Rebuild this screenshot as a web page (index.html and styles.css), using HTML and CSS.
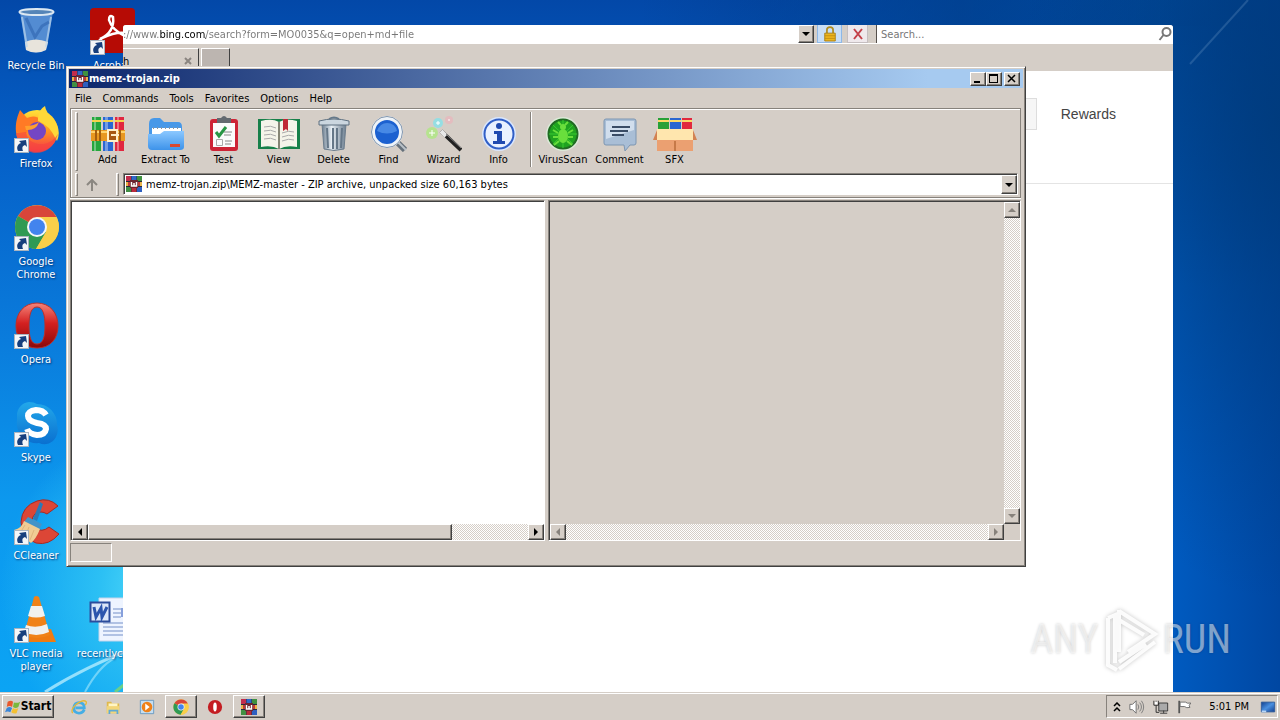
FILE: index.html
```html
<!DOCTYPE html>
<html lang="en">
<head>
  <meta charset="UTF-8" />
  <meta name="viewport" content="width=device-width, initial-scale=1.0" />
  <title>Desktop</title>
  <link rel="stylesheet" href="styles.css">
</head>
<body>
  <!-- shared icons -->
  <svg class="defs" aria-hidden="true">
    <defs>
      <linearGradient id="gFolder" x1="0" y1="0" x2="0" y2="1"><stop offset="0" stop-color="#8cc8ff"/><stop offset="1" stop-color="#3d93ea"/></linearGradient>
      <linearGradient id="gSteel" x1="0" y1="0" x2="1" y2="0"><stop offset="0" stop-color="#6d7f90"/><stop offset=".4" stop-color="#e8eff5"/><stop offset="1" stop-color="#6d7f90"/></linearGradient>
      <linearGradient id="gOpera" x1="0" y1="0" x2="0" y2="1"><stop offset="0" stop-color="#f4857a"/><stop offset=".45" stop-color="#d42020"/><stop offset="1" stop-color="#8a0808"/></linearGradient>
      <linearGradient id="gFox" x1="0" y1="0" x2="0" y2="1"><stop offset="0" stop-color="#ffe23a"/><stop offset=".5" stop-color="#ff9520"/><stop offset="1" stop-color="#f3324f"/></linearGradient>
      <linearGradient id="gSkype" x1="0" y1="0" x2="0" y2="1"><stop offset="0" stop-color="#22a8ea"/><stop offset="1" stop-color="#0a70d0"/></linearGradient>
      <linearGradient id="gScreen" x1="0" y1="0" x2="1" y2="1"><stop offset="0" stop-color="#103f8e"/><stop offset=".5" stop-color="#4a90e0"/><stop offset="1" stop-color="#123f90"/></linearGradient>
    </defs>
    <symbol id="shortcut" viewBox="0 0 15 15">
      <rect x=".5" y=".5" width="14" height="14" fill="#f4f6f8" stroke="#a9b4c0"/>
      <path d="M4 13C2 9 4 6 7 5L5 3l7-1 1 7-2-2C8 8 8 10 9 13z" fill="#173f7d"/>
    </symbol>
    <symbol id="rar" viewBox="0 0 16 16">
      <rect width="16" height="16" fill="#25283a"/>
      <path fill="#c22c4c" d="M0 0h5v5H0z"/><path fill="#2f68c8" d="M5.500 0h5v5h-5z"/><path fill="#3f9140" d="M11 0h5v5h-5z"/>
      <path fill="#c43b36" d="M0 6h16v4H0z"/><path fill="#e9b44a" d="M0 6h2v4H0zm14 0h2v4h-2z"/>
      <path fill="#418f43" d="M0 11h5v5H0z"/><path fill="#bb2a3c" d="M5.500 11h5v5h-5z"/><path fill="#2e5fc0" d="M11 11h5v5h-5z"/>
      <path fill="#6b2430" d="M4 4h8v8H4z"/><path d="M5.500 6v4h5V6M8 7v3" fill="none" stroke="#fff" stroke-width="1.500"/>
    </symbol>
    <symbol id="chrome" viewBox="0 0 46 46">
      <circle cx="23" cy="23" r="22" fill="#f6ca45"/>
      <path d="M23 23 4 12a22 22 0 0 1 38.500 1z" fill="#d8453a"/>
      <path d="M4 12a22 22 0 0 0 18 33l10-17-9-5z" fill="#2f9a54"/>
      <path d="M23 13h19.500A22 22 0 0 1 22 45l10-17z" fill="#f9cf4a"/>
      <circle cx="23" cy="23" r="10" fill="#f4f7f9"/><circle cx="23" cy="23" r="8" fill="#4284ee"/>
    </symbol>
  </svg>

  <main class="desktop">
    <svg class="streaks left" viewBox="0 0 124 110" aria-hidden="true">
      <path d="M30 110Q70 85 124 64" stroke="#c8f4ff" stroke-width="3" opacity=".7"/>
      <path d="M70 110Q84 84 100 76" stroke="#a5e8fb" stroke-width="2" opacity=".6"/>
      <path d="M100 110l10-8" stroke="#6ad08a" stroke-width="3"/>
    </svg>
    <svg class="streaks right" viewBox="0 0 100 80" aria-hidden="true">
      <path d="M10 64 68 0" stroke="#7fa9d0" stroke-width="2" opacity=".25"/>
    </svg>

    <nav class="icons" aria-label="Desktop icons">
      <a class="icon" href="#"><svg class="pic" viewBox="0 0 48 48">
        <path d="M8 4 14 42q10 5 20 0L41 4z" fill="#6298d8" opacity=".85"/>
        <path d="M13 34q10-5 23 0l-2 8q-10 5-20 0z" fill="#e8e4dc"/>
        <path d="m10 9 5 30M39 9l-5 30" stroke="#bcd6ee" stroke-width="2" opacity=".7"/>
        <path d="m14 10 9 19 7-11 7-4" fill="none" stroke="#285ca8" stroke-width="3" opacity=".5"/>
        <ellipse cx="24.500" cy="4" rx="17" ry="3" fill="#5585b8" stroke="#dce8f2" stroke-width="2"/></svg><span>Recycle Bin</span></a>
      <a class="icon" href="#"><svg class="pic" viewBox="0 0 48 48">
        <circle cx="25" cy="25" r="21" fill="url(#gFox)"/>
        <path d="M4 26C3 16 6 9 8 4l7 8q8-4 15 2L24 21q-8 0-9 6z" fill="#ff7a25"/>
        <path d="M26 12Q27 3 33 0q1 7 8 12 9 12 4 23-8-17-19-20z" fill="#ffd838"/>
        <path d="M4 27q3 17 18 20 18 1 24-19-5 8-14 10-16 1-18-12z" fill="#f6433f" opacity=".65"/>
        <circle cx="25" cy="25" r="9" fill="#7446c4"/><path d="M13 20q10 0 14-4-3 9-13 8z" fill="#ffa02d"/></svg>
        <svg class="link"><use href="#shortcut"/></svg><span>Firefox</span></a>
      <a class="icon" href="#"><svg class="pic" viewBox="-2 0 48 48"><use href="#chrome" width="46" height="46"/></svg>
        <svg class="link"><use href="#shortcut"/></svg><span>Google Chrome</span></a>
      <a class="icon" href="#"><svg class="pic" viewBox="0 0 48 48">
        <path fill-rule="evenodd" d="M25 1C12 1 4 11 4 24s8 22 21 22 21-9 21-22S38 1 25 1zm0 4c6 0 8 8 8 19s-2 18-8 18-8-7-8-18 2-19 8-19z" fill="url(#gOpera)" stroke="#ba302b"/></svg>
        <svg class="link"><use href="#shortcut"/></svg><span>Opera</span></a>
      <a class="icon" href="#"><svg class="pic" viewBox="0 0 48 48">
        <path d="M5 15A13 13 0 0 1 17 2q5 0 8 2a20 20 0 0 1 20 21q2 6-1 12a13 13 0 0 1-17 6A20 20 0 0 1 5 20z" fill="url(#gSkype)"/>
        <path d="M34 15q-3-5-10-5-8 1-8 6 0 5 9 7 9 1 9 6-1 6-9 6-8-1-10-6" fill="none" stroke="#fff" stroke-width="6"/></svg>
        <svg class="link"><use href="#shortcut"/></svg><span>Skype</span></a>
      <a class="icon" href="#"><svg class="pic" viewBox="0 0 48 48">
        <path d="M46 8Q37-1 25 3 10 8 9 24q1 16 15 21 13 3 23-9l-10-7q-7 6-14 1-6-8 0-14 6-4 12 0z" fill="#dc4636" stroke="#a52b25"/>
        <path d="m28 4 3 2-6 17-4-2z" fill="#2a7ab8"/><path d="m16 19 14 7-3 6-15-8z" fill="#4393c8"/>
        <path d="M12 23 28 31q-4 10-9 14L2 32q8-2 10-9z" fill="#f0cc94"/><path d="m13 27-5 8m9-6-4 10m9-7-4 10" stroke="#e0b47c"/></svg>
        <svg class="link"><use href="#shortcut"/></svg><span>CCleaner</span></a>
      <a class="icon" href="#"><svg class="pic" viewBox="0 0 48 48">
        <path d="m11 34-5 12h38l-5-13z" fill="#ee7b12"/><path d="M22 1q2-2 5 0l11 38q-13 6-26 0z" fill="#f08218"/>
        <path d="m19 10-3 10q8 3 17 0l-3-10zm-5 19-2 7q12 6 25 0l-2-8q-11 5-21 1z" fill="#f1f1ef"/></svg>
        <svg class="link"><use href="#shortcut"/></svg><span>VLC media player</span></a>
      <a class="icon" href="#"><svg class="pic" viewBox="0 0 48 48">
        <rect x="2" width="45" height="45" rx="4" fill="#b60b05"/>
        <path d="M12 31Q27 24 25 9q-4-3-4 3 3 10 16 16 6 1 4-2-10-4-27 4-6 6-1 2" fill="none" stroke="#fff" stroke-width="2.500"/></svg>
        <svg class="link"><use href="#shortcut"/></svg><span>Acrobat</span></a>
      <a class="icon last" href="#"><svg class="pic" viewBox="0 0 48 48">
        <path d="M11 2h36v43H11z" fill="#eef4ff" stroke="#c4d4ea"/>
        <path d="M25 13h8m-8 4h8m-8 4h8M15 27h30M15 31h30M15 35h30M15 39h30" stroke="#7590c8"/><path d="M33 12h10v9H33z" fill="#86a0dc"/>
        <rect x="2.500" y="6.500" width="19" height="19" fill="#dce6f8" stroke="#2c4c9c" stroke-width="2"/>
        <path d="m6 11 2 10 5-9 1 9 5-10" fill="none" stroke="#2c55ad" stroke-width="3"/></svg><span>recentlycut.rtf</span></a>
    </nav>

    <section class="browser" aria-label="Browser">
      <div class="address-row">
        <input class="url" type="text" aria-label="Address" value="://www.bing.com/search?form=MO0035&amp;q=open+md+file">
        <button class="btn3d drop" aria-label="Address history"><i class="arrow down"></i></button>
        <button class="lock" aria-label="Security report"><svg viewBox="0 0 16 18"><path d="M4.500 8V4q0-3 3.500-3t3.500 3v4" fill="none" stroke="#b08c20" stroke-width="2"/><path d="M2 8h12v9H2z" fill="#edb51c" stroke="#a67b12"/><path d="M2 11h12M2 14h12" stroke="#c18c14"/></svg></button>
        <button class="stop" aria-label="Stop"><svg viewBox="0 0 12 12"><path d="m2 1 8 10m0-10L2 11" stroke="#c3414a" stroke-width="2"/></svg></button>
        <label class="search"><input type="text" placeholder="Search..." aria-label="Search"><svg viewBox="0 0 14 14"><circle cx="8.500" cy="5" r="4" fill="none" stroke="#777" stroke-width="2"/><path d="m5.500 8-4 5" stroke="#777" stroke-width="2"/></svg></label>
      </div>
      <div class="tabs">
        <div class="tab"><span>h</span><button aria-label="Close tab"><svg viewBox="0 0 8 8"><path d="m1 1 6 6m0-6L1 7" stroke="#8a8580" stroke-width="2"/></svg></button></div>
        <button class="new-tab" aria-label="New tab"></button>
      </div>
      <div class="page">
        <div class="page-head"><span class="query"></span><a href="#">Rewards</a></div>
      </div>
    </section>

    <section class="window" aria-label="memz-trojan.zip">
      <header class="titlebar">
        <svg class="small"><use href="#rar"/></svg>
        <h1>memz-trojan.zip</h1>
        <button class="btn3d" aria-label="Minimize"><svg viewBox="0 0 12 10"><path d="M2 7h6v2H2z"/></svg></button>
        <button class="btn3d" aria-label="Maximize"><svg viewBox="0 0 12 10"><path fill-rule="evenodd" d="M1 0h9v9H1zm1 2v6h7V2z"/></svg></button>
        <button class="btn3d close" aria-label="Close"><svg viewBox="0 0 12 10"><path d="m2 1 7 7m0-7L2 8" stroke="#000" stroke-width="1.500"/></svg></button>
      </header>
      <nav class="menu">
        <button>File</button><button>Commands</button><button>Tools</button><button>Favorites</button><button>Options</button><button>Help</button>
      </nav>
      <div class="bars">
        <div class="toolbar">
          <i class="grip"></i>
          <button class="tool"><svg viewBox="0 0 36 36"><path d="M2 1h9v34H2z" fill="#26a63c"/><path d="M13 1h10v34H13z" fill="#2867d4"/><path d="M25 1h9v34h-9z" fill="#e1263f"/><path d="M4 1h2v34H4zm11 0h3v34h-3zm12 0h2v34h-2z" fill="#fff" opacity=".35"/><path d="M2 5h9M13 5h10m2 0h9" stroke="#f4d34a" stroke-width="2"/><path d="M1 14h34v11H1z" fill="#e89820"/><path d="M1 16h34" stroke="#ffd26a" stroke-width="2"/><path d="M6 14v11m4-11v11m20-11v11" stroke="#a45e10" stroke-width="2"/><path d="M18 14h9v11h-9zm3 5h8" fill="#a85a12" stroke="#fff0c8" stroke-width="2"/></svg>Add</button>
          <button class="tool wide"><svg viewBox="0 0 36 36"><path d="M1 8q0-6 5-6h6l4 4h14q4 0 4 5v10H1z" fill="#4798e8"/><path d="M4 12h29v10H4z" fill="#fff"/><path d="M5 12h27" stroke="#8395a8" stroke-width="2" stroke-dasharray="1 3"/><path d="M0 18h12l4-3h20v16q0 3-4 3H4q-4 0-4-4z" fill="url(#gFolder)"/><path d="M22 28h10v3H22z" fill="#d84830"/></svg>Extract To</button>
          <button class="tool"><svg viewBox="0 0 36 36"><rect x="4" y="3" width="28" height="32" rx="3" fill="#cd2436"/><path d="M7 7h22v24H7z" fill="#fbfbfb"/><path d="M11 2h4q3-4 6 0h4v5H11z" fill="#646a70"/><path d="m10 16 3 4 7-9" fill="none" stroke="#299645" stroke-width="3"/><path d="M18 16h8M18 19h7M19 25h7M19 28h6" stroke="#888"/><path d="M10.500 23.500h6v6h-6z" fill="none" stroke="#aaa"/></svg>Test</button>
          <button class="tool"><svg class="book" viewBox="0 0 44 36"><path d="M1 3h42v30H1z" fill="#17804a"/><path d="M4 5q11-3 18 1 7-4 18-1v26q-11-2-18 2-7-4-18-2z" fill="#f5f4ea"/><path d="M22 6v27" stroke="#858575" stroke-width="2"/><path d="M7 11q7-2 12 1M7 15q7-2 12 1M7 19q7-2 12 1M7 23q7-2 12 1m6-7q7-3 12-1m-12 5q7-3 12-1m-12 5q7-3 12-1" fill="none" stroke="#aaa"/><path d="M26 3h5v12l-2-2-3 2z" fill="#c02836"/></svg>View</button>
          <button class="tool"><svg viewBox="0 0 36 36"><path d="M6 8h24l-2 25q-10 3-20 0z" fill="url(#gSteel)" stroke="#6b7c8c"/><path d="m11 12 1 20m5-20v21m4-21v21m5-21-1 20" stroke="#657788" stroke-width="2"/><path d="M3 5q15-4 30 0v4H3z" fill="#cbd6df" stroke="#5e7080"/><path d="M13 3q5-3 10 0" fill="none" stroke="#66798a" stroke-width="2"/></svg>Delete</button>
          <button class="tool"><svg viewBox="0 0 36 36"><path d="m25 25 9 9" stroke="#66717b" stroke-width="6"/><path d="m27 26 8 8" stroke="#b9c1c8" stroke-width="2"/><circle cx="16" cy="16" r="14" fill="#1c61d0" stroke="#eef3f8" stroke-width="4"/><circle cx="16" cy="16" r="15.500" fill="none" stroke="#8195ad"/><path d="M6 15q3-8 10-8 8 0 10 8-10 5-20 0z" fill="#72b1fa" opacity=".5"/></svg>Find</button>
          <button class="tool"><svg viewBox="0 0 36 36"><circle cx="6" cy="17" r="6" fill="#a8ed77" opacity=".7"/><circle cx="12" cy="7" r="5" fill="#79e5ef" opacity=".7"/><circle cx="23" cy="4" r="4" fill="#f3aab8" opacity=".5"/><path d="M6 14v6M3 17h6M12 5v4M10 7h4M23 3v2" stroke="#fff"/><path d="m15 15 20 19" stroke="#222" stroke-width="4"/><path d="m15 15 5 5" stroke="#e8e8e8" stroke-width="4"/><path d="m20 18 15 14" stroke="#888"/></svg>Wizard</button>
          <button class="tool"><svg viewBox="0 0 36 36"><circle cx="18" cy="18" r="17" fill="#d9e7ff"/><circle cx="18" cy="18" r="14.500" fill="#e9f1ff" stroke="#315fc6" stroke-width="2"/><circle cx="18" cy="10" r="3" fill="#204ab0"/><path d="M13 15h8v10h3v3H12v-3h4v-7h-3z" fill="#204ab0"/></svg>Info</button>
          <i class="sep"></i>
          <button class="tool scan"><svg viewBox="0 0 36 36"><circle cx="18" cy="18" r="16" fill="#1fa320" stroke="#dce9d8" stroke-width="2"/><circle cx="18" cy="18" r="14.500" fill="none" stroke="#216b24" stroke-width="2"/><path d="M18 4v28M4 18h28M8 9l20 19M8 28 28 9" stroke="#38ca30"/><ellipse cx="18" cy="20" rx="5" ry="7" fill="#69df3c"/><circle cx="18" cy="11" r="3" fill="#69df3c"/><path d="m13 17-5-3m5 7H8m6 4-5 4m14-12 5-3m-5 7h5m-6 4 5 4M16 9l-3-3m7 3 3-3" fill="none" stroke="#69df3c" stroke-width="2"/></svg>VirusScan</button>
          <button class="tool"><svg viewBox="0 0 36 36"><path d="M4 3h28q2 0 2 2v22q0 2-2 2h-4l-5 6-1-6H4q-2 0-2-2V5q0-2 2-2z" fill="#a9bed6" stroke="#7d96b2"/><path d="M4 5h28v9L4 23z" fill="#dbe6f2" opacity=".8"/><path d="M10 11h18M8 15h18M10 19h12" stroke="#3a4c66" stroke-width="2"/></svg>Comment</button>
          <button class="tool"><svg class="book" viewBox="0 0 44 36"><path d="M5 2h11v13H5z" fill="#28a137"/><path d="M17 2h11v13H17z" fill="#2965d0"/><path d="M29 2h10v13H29z" fill="#e1283d"/><path d="M5 5h11m1 0h11m1 0h10" stroke="#fbd966" stroke-width="2"/><path d="M4 14h36v21H4z" fill="#eba071"/><path d="M22 25v10" stroke="#c67948" stroke-width="2"/><path d="M4 13h36l2 11H2z" fill="#ffe6ae"/><path d="m4 14-4 10h4zm36 0 4 10h-4z" fill="#d38251"/></svg>SFX</button>
        </div>
        <div class="pathbar">
          <i class="grip"></i>
          <button class="up" aria-label="Up one level"><svg viewBox="0 0 12 12"><path d="M6 12V2M1 6l5-5 5 5" fill="none" stroke="#8b8781" stroke-width="2"/></svg></button>
          <i class="grip"></i>
          <div class="combo">
            <svg class="small"><use href="#rar"/></svg>
            <select aria-label="Path"><option>memz-trojan.zip\MEMZ-master - ZIP archive, unpacked size 60,163 bytes</option></select>
            <span class="btn3d drop"><i class="arrow down"></i></span>
          </div>
        </div>
      </div>
      <div class="panes">
        <div class="pane files">
          <div class="view"></div>
          <div class="hscroll"><button class="btn3d" aria-label="Scroll left"><i class="arrow prev"></i></button><span class="btn3d thumb"></span><button class="btn3d end" aria-label="Scroll right"><i class="arrow next"></i></button></div>
        </div>
        <div class="pane comment">
          <div class="view"></div>
          <div class="vscroll"><button class="btn3d" aria-label="Scroll up" disabled><i class="arrow up-a"></i></button><button class="btn3d end" aria-label="Scroll down" disabled><i class="arrow down"></i></button></div>
          <div class="hscroll"><button class="btn3d" aria-label="Scroll left" disabled><i class="arrow prev"></i></button><button class="btn3d end" aria-label="Scroll right" disabled><i class="arrow next"></i></button></div>
        </div>
      </div>
      <footer class="status"><span></span></footer>
    </section>

    <div class="watermark">
      <span>ANY</span>
      <svg viewBox="0 0 56 64" aria-hidden="true"><path d="M5 10v47l9 5M16 2v42M16 3l36 23-27 18M16 12l25 15M16 61l36-27M16 54l27-18M5 10l7-3v48" fill="none" stroke-width="4"/></svg>
      <span>RUN</span>
    </div>
  </main>

  <footer class="taskbar">
    <button class="btn3d start"><svg viewBox="0 0 18 16"><path d="M3 2q4-2 6 0L8 8Q5 6 2 8z" fill="#e9582c"/><path d="M10 3q4 1 7-1l-2 6q-3 2-6 0z" fill="#7ab83c"/><path d="M2 9q3-2 6 0l-2 5q-3-2-6 0z" fill="#3a86d8"/><path d="M9 9q3 2 6 0l-2 6q-3 1-6-1z" fill="#f4c032"/></svg>Start</button>
    <button class="task" aria-label="Internet Explorer"><svg viewBox="0 0 18 18"><path d="M15 12q-2 4-6 4-6-1-6-6 1-6 6-6 6 0 6 6H5" fill="none" stroke="#45aee5" stroke-width="3"/><path d="M2 16Q-1 12 6 6q8-6 11-3 1 1-1 4" fill="none" stroke="#e4b83a" stroke-width="1.500"/></svg></button>
    <button class="task" aria-label="Explorer"><svg viewBox="0 0 18 18"><path d="M2 3h5l1 2h8v11H2z" fill="#e0b94c"/><path d="M4 5h10v5H4z" fill="#fff5c5"/><path d="M2 8h14v8H2z" fill="#f3d679"/><path d="M4 17v-5h11v5h-2v-3H6v3z" fill="#5faad6"/></svg></button>
    <button class="task" aria-label="Media Player"><svg viewBox="0 0 18 18"><path d="M1.500 1.500h15v15h-15z" fill="#c5def1" stroke="#6696be"/><circle cx="9" cy="9" r="6" fill="#ef8118"/><path d="m7 5 5 4-5 4z" fill="#fff"/></svg></button>
    <button class="task btn3d" aria-label="Google Chrome"><svg><use href="#chrome"/></svg></button>
    <button class="task" aria-label="Opera"><svg viewBox="0 0 18 18"><circle cx="9" cy="9" r="8" fill="#c41d22"/><ellipse cx="9" cy="9" rx="2" ry="5" fill="#fff"/></svg></button>
    <button class="task btn3d" aria-label="WinRAR"><svg><use href="#rar"/></svg></button>
    <div class="tray">
      <button aria-label="Show hidden icons"><svg class="chev" viewBox="0 0 8 10"><path d="m1 4 3-3 3 3M1 9l3-3 3 3" fill="none" stroke="#000" stroke-width="1.500"/></svg></button>
      <button aria-label="Volume"><svg viewBox="0 0 18 16"><path d="M1 5h3l4-4v14l-4-4H1z" fill="#fff" stroke="#666"/><path d="M10 5q2 3 0 6m2-8q4 5 0 10m2-12q5 7 0 14" fill="none" stroke="#777"/></svg></button>
      <button aria-label="Network"><svg viewBox="0 0 18 16"><path d="M6.500 3.500h10v9h-10z" fill="#aaa" stroke="#333"/><path d="M8 15h8m-4-3v3" stroke="#333"/><path d="M1 1v5h5V1M3.500 1v3M3.500 6v8H7" fill="none" stroke="#222"/><path d="M2 2h3v3H2z" fill="#fff"/></svg></button>
      <button aria-label="Action center"><svg viewBox="0 0 18 16"><path d="M2.500 1v14" stroke="#555" stroke-width="2"/><path d="M3.500 2.500h6q2 2 6 1-3 3-1 5-4 1-6-1h-5z" fill="#fff" stroke="#666"/></svg></button>
      <time>5:01 PM</time>
      <button aria-label="Show desktop"><svg viewBox="0 0 18 16"><path d="M1.500 2.500h15v11h-15z" fill="url(#gScreen)" stroke="#2f5a98"/><path d="M2 13h5" stroke="#b9d6f6" stroke-width="2"/></svg></button>
    </div>
  </footer>
</body>
</html>
```
FILE: styles.css
```css
* {
  box-sizing: border-box;
}
body {
  margin: 0;
  height: 100vh;
  display: flex;
  flex-direction: column;
  overflow: hidden;
  font-family: "DejaVu Sans Condensed", "DejaVu Sans", sans-serif;
  font-size: 11px;
  line-height: 13px;
  color: #000;
}
button, input, select {
  font: inherit;
  color: inherit;
  margin: 0;
  padding: 0;
  border: 0;
  border-radius: 0;
  background: none;
}
a {
  color: inherit;
  text-decoration: none;
}
svg {
  display: block;
  flex: none;
}
.defs {
  position: absolute;
  width: 0;
  height: 0;
}

/* wallpaper */
.desktop {
  flex: 1;
  min-height: 0;
  position: relative;
  overflow: hidden;
  background:
    radial-gradient(circle at 170px 590px, #5ce0fa 0, #2cc0f4 70px, transparent 170px),
    radial-gradient(ellipse 260px 480px at 100% 120px, rgba(0, 58, 120, 0.8), transparent),
    linear-gradient(90deg, transparent 91%, rgba(0, 50, 130, 0.5) 100%),
    linear-gradient(90deg, transparent 50%, rgba(0, 55, 125, 0.6) 75%, rgba(0, 55, 125, 0.5)) top / 100% 26px no-repeat,
    linear-gradient(rgba(0, 55, 125, 0.5), transparent) right 26px / 107px 260px no-repeat,
    linear-gradient(90deg, transparent 60%, #005cc2 92%),
    linear-gradient(#0348a8 0, #0560c8 150px, #0a7cdc 340px, #0c98ee 500px, #0ba4f4 690px);
}
.streaks {
  position: absolute;
  fill: none;
}
.streaks.left {
  left: 15px;
  bottom: 0;
  width: 124px;
  height: 110px;
}
.streaks.right {
  right: 0;
  top: 0;
  width: 100px;
  height: 80px;
}
.icons {
  display: grid;
  grid-auto-flow: column;
  grid-template-rows: repeat(7, 98px);
  grid-auto-columns: 72px;
  column-gap: 4px;
  justify-content: start;
  padding-top: 8px;
}
.icon {
  position: relative;
  display: flex;
  flex-direction: column;
  align-items: center;
  padding: 0 8px;
  text-align: center;
  color: #fff;
  text-shadow: 1px 1px 2px #003070;
}
.icon.last {
  grid-row: 7;
}
.icon span {
  margin: 3px -8px 0;
}
.pic {
  width: 48px;
  height: 48px;
}
.icon .link {
  position: absolute;
  left: 14px;
  top: 32px;
  width: 15px;
  height: 15px;
}

/* raised classic button */
.btn3d {
  display: flex;
  flex: none;
  align-items: center;
  justify-content: center;
  background: #d5cec7;
  border: 1px solid;
  border-color: #fff #404040 #404040 #fff;
  box-shadow: inset -1px -1px #87827c;
}
.arrow {
  width: 0;
  height: 0;
  border: 4px solid transparent;
}
.arrow.down {
  border-top-color: #000;
  border-bottom: 0;
}
.arrow.up-a {
  border-bottom-color: #000;
  border-top: 0;
}
.arrow.prev {
  border-right-color: #000;
  border-left: 0;
}
.arrow.next {
  border-left-color: #000;
  border-right: 0;
}
:disabled .arrow.down {
  border-top-color: #87827c;
}
:disabled .arrow.up-a {
  border-bottom-color: #87827c;
}
:disabled .arrow.prev {
  border-right-color: #87827c;
}
:disabled .arrow.next {
  border-left-color: #87827c;
}
.drop {
  width: 16px;
  align-self: stretch;
}

/* browser behind */
.browser {
  position: absolute;
  left: 123px;
  right: 107px;
  top: 25px;
  bottom: 0;
  display: flex;
  flex-direction: column;
  overflow: hidden;
  border-radius: 3px 3px 0 0;
  background: #d5cec7;
}
.address-row {
  display: flex;
  height: 19px;
  border-bottom: 1px solid #fff;
}
.url {
  flex: 1;
  min-width: 0;
  color: transparent;
  background: linear-gradient(90deg, #777 37px, #000 37px, #000 83px, #777 83px) text, #fff;
}
.url + .drop {
  margin-right: 3px;
}
.lock, .stop {
  display: flex;
  align-items: center;
  justify-content: center;
  border: 1px solid #8db8e8;
  border-top: 0;
  background: #c9def6;
}
.lock {
  width: 25px;
}
.lock svg {
  width: 14px;
  height: 16px;
}
.stop {
  width: 21px;
  margin: 0 8px 0 5px;
  background: #efe9ec;
  border-color: #c5bec0;
}
.stop svg {
  width: 12px;
  height: 12px;
}
.search {
  display: flex;
  align-items: center;
  width: 297px;
  padding: 0 1px 0 4px;
  border-left: 1px solid #55504c;
  background: #fff;
}
.search input {
  flex: 1;
  min-width: 0;
}
.search input::placeholder {
  color: #777;
  opacity: 1;
}
.search svg {
  width: 14px;
  height: 14px;
}
.tabs {
  display: flex;
  height: 27px;
  padding-top: 4px;
}
.tab {
  display: flex;
  align-items: center;
  justify-content: space-between;
  width: 76px;
  padding: 2px 6px 0 0;
  border-top: 1px solid #fff;
  border-right: 1px solid #404040;
}
.tab svg {
  width: 8px;
  height: 8px;
}
.new-tab {
  width: 29px;
  margin-left: 2px;
  background: #bcb5b0;
  border: 1px solid;
  border-color: #fff #404040 transparent #fff;
}
.page {
  flex: 1;
  background: #fff;
}
.page-head {
  display: flex;
  align-items: center;
  justify-content: flex-end;
  gap: 24px;
  height: 113px;
  padding: 0 57px 26px 0;
  border-bottom: 1px solid #e4e4e4;
  font: 14px/20px "Liberation Sans", Arial, sans-serif;
  color: #444;
}
.query {
  flex: 1;
  height: 32px;
  border: 1px solid #ddd;
  background: #f6f6f6;
}

/* archive window */
.window {
  position: absolute;
  left: 66px;
  right: 254px;
  top: 66px;
  bottom: 125px;
  display: flex;
  flex-direction: column;
  padding: 2px;
  border: 1px solid;
  border-color: #d5cec7 #404040 #404040 #d5cec7;
  background: #d5cec7;
  box-shadow: inset 1px 1px #fff, inset -1px -1px #87827c;
}
.titlebar {
  display: flex;
  align-items: center;
  height: 19px;
  padding: 0 3px;
  background: linear-gradient(90deg, #0c266b, #a6caf0 90%);
  color: #fff;
}
.titlebar h1 {
  flex: 1;
  margin: 0 0 0 1px;
  font-size: 11px;
}
.titlebar .btn3d {
  width: 16px;
  height: 14px;
}
.titlebar .btn3d svg {
  width: 12px;
  height: 10px;
}
.titlebar .close {
  margin-left: 2px;
}
.small {
  width: 16px;
  height: 16px;
}
.menu {
  display: flex;
  gap: 11px;
  height: 20px;
  padding: 0 6px;
}
.bars {
  border: 1px solid #87827c;
  margin: 0 2px 0 1px;
  padding: 1px;
  box-shadow: inset 1px 1px #fff, 0 1px #fff;
}
.grip {
  width: 3px;
  border: 1px solid;
  border-color: #fff #87827c #87827c #fff;
}
.toolbar {
  display: flex;
  height: 63px;
  padding: 2px 3px;
}
.tool {
  display: flex;
  flex-direction: column;
  align-items: center;
  width: 55px;
  padding-top: 4px;
}
.tool svg {
  width: 36px;
  height: 36px;
  margin-bottom: 1px;
}
.tool .book {
  width: 44px;
}
.tool.wide {
  width: 61px;
}
.tool.scan {
  width: 58px;
}
.grip + .tool {
  margin-left: 2px;
}
.sep {
  width: 2px;
  margin: 0 2px 4px 4px;
  border-left: 1px solid #87827c;
  border-right: 1px solid #fff;
}
.pathbar {
  display: flex;
  height: 23px;
  padding: 0 1px 0 3px;
}
.up {
  display: flex;
  align-items: center;
  justify-content: center;
  width: 27px;
  margin-right: 11px;
}
.up svg {
  width: 12px;
  height: 12px;
}
.combo {
  flex: 1;
  display: flex;
  align-items: center;
  margin: 0 0 1px 4px;
  padding: 0 0 0 2px;
  border: 1px solid;
  border-color: #87827c #fff #fff #87827c;
  background: #fff;
  box-shadow: inset 1px 1px #404040;
}
.combo select {
  flex: 1;
  min-width: 0;
  margin-left: 4px;
  appearance: none;
}
.combo .drop {
  margin-top: 1px;
}
.panes {
  flex: 1;
  min-height: 0;
  display: grid;
  grid-template-columns: 476fr 473fr;
  gap: 3px;
  padding: 2px 2px 0 1px;
}
.pane {
  display: grid;
  grid-template-rows: 1fr 16px;
  border: 1px solid;
  border-color: #87827c #fff #fff #87827c;
  box-shadow: inset 1px 1px #404040;
  padding: 1px 0 0 1px;
}
.pane.comment {
  grid-template-columns: 1fr 16px;
}
.files .view {
  background: #fff;
}
.hscroll, .vscroll {
  display: flex;
  background: repeating-conic-gradient(#fff 0 25%, #d5cec7 0 50%) 0 0 / 2px 2px;
}
.vscroll {
  flex-direction: column;
}
.hscroll button, .vscroll button {
  width: 16px;
  height: 16px;
}
.hscroll .end {
  margin-left: auto;
}
.vscroll .end {
  margin-top: auto;
}
.thumb {
  width: 77%;
}
.status {
  display: flex;
  height: 23px;
  padding: 2px 1px;
}
.status span {
  width: 42px;
  border: 1px solid;
  border-color: #87827c #fff #fff #87827c;
}

/* logo over the lower right corner */
.watermark {
  position: absolute;
  right: 49px;
  bottom: 20px;
  display: flex;
  align-items: center;
  gap: 4px;
  font: 40px/64px "Roboto Condensed", "Liberation Sans", sans-serif;
  color: rgba(255, 255, 255, 0.5);
  text-shadow: 0 0 3px rgba(0, 0, 0, 0.2);
}
.watermark svg {
  width: 56px;
  height: 64px;
  stroke: rgba(255, 255, 255, 0.9);
  filter: drop-shadow(0 0 2px rgba(0, 0, 0, 0.25));
}

.taskbar {
  display: flex;
  height: 28px;
  padding: 3px 2px 2px;
  background: #d5cec7;
  box-shadow: inset 0 1px #d5cec7, inset 0 2px #fff;
}
.start {
  width: 52px;
  margin-right: 9px;
  font-size: 12px;
  font-weight: bold;
}
.start svg {
  width: 16px;
  height: 16px;
}
.task {
  display: flex;
  align-items: center;
  justify-content: center;
  width: 32px;
  margin-right: 2px;
}
.task svg {
  width: 16px;
  height: 16px;
}
.tray {
  display: flex;
  align-items: center;
  margin-left: auto;
  padding-left: 2px;
  border: 1px solid;
  border-color: #87827c #fff #fff #87827c;
}
.tray svg {
  width: 16px;
  height: 16px;
  margin: 0 4px;
}
.tray .chev {
  width: 8px;
  height: 10px;
}
.tray time {
  margin: 0 7px 0 12px;
}
.tray time + button svg {
  margin-right: 1px;
}
```
